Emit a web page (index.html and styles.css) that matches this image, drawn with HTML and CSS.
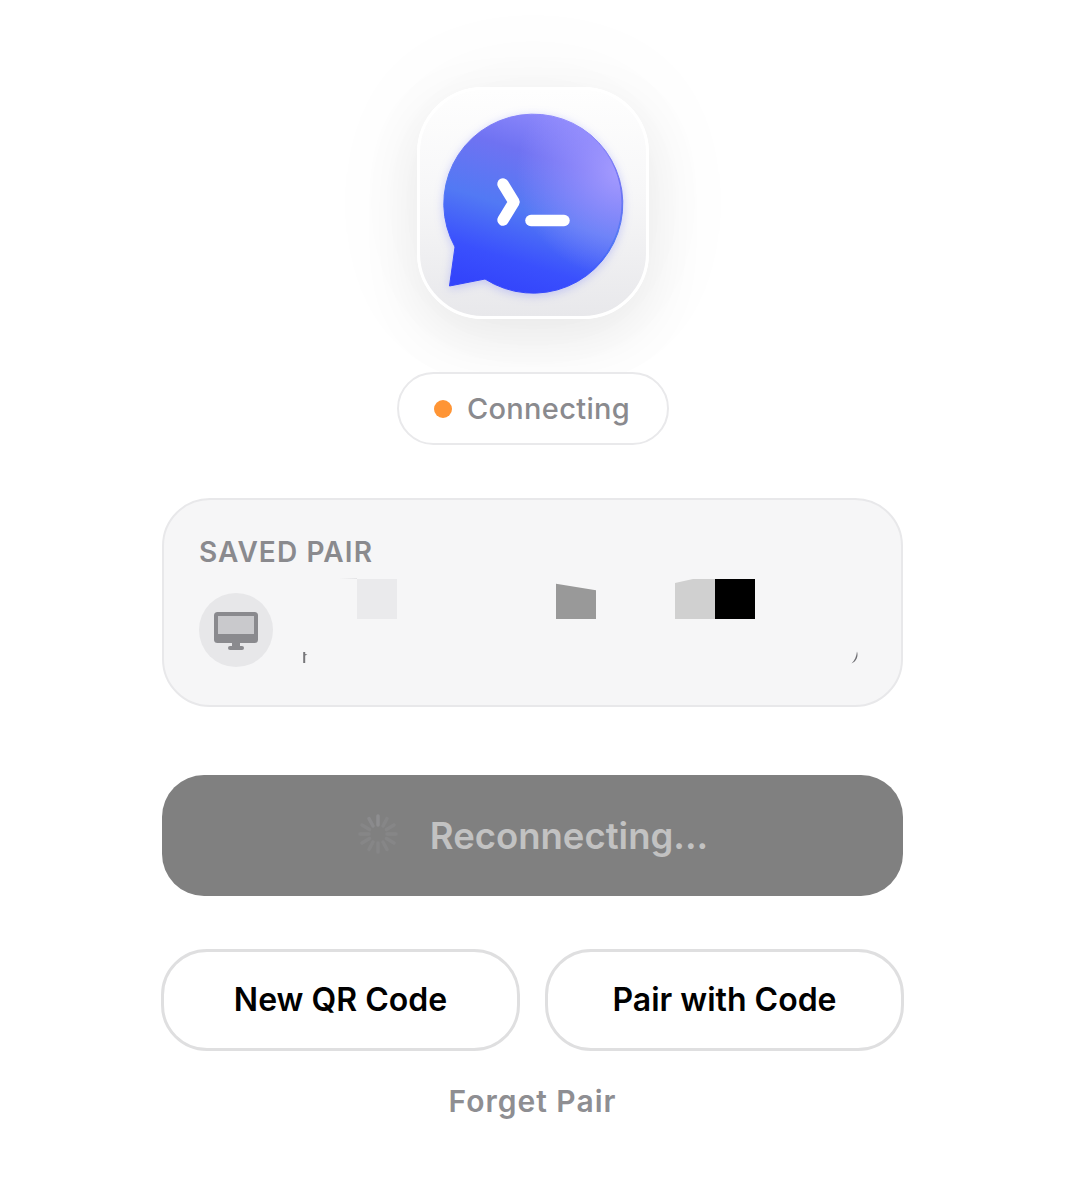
FILE: index.html
```html
<!DOCTYPE html>
<html>
<head>
<meta charset="utf-8">
<title>Saved Pair</title>
<link rel="stylesheet" href="styles.css">
</head>
<body>
<div class="page">
  <div class="app-icon">
    <svg class="app-glyph" width="226" height="226" viewBox="4 3 226 226">
      <defs>
        <linearGradient id="bubbleFill" gradientUnits="userSpaceOnUse" x1="140" y1="25" x2="85" y2="205">
          <stop offset="0" stop-color="#8f8afc"/>
          <stop offset="0.25" stop-color="#6f72f2"/>
          <stop offset="0.55" stop-color="#5279f4"/>
          <stop offset="0.82" stop-color="#3a50fd"/>
          <stop offset="1" stop-color="#3344fb"/>
        </linearGradient>
        <radialGradient id="bubbleEdge" gradientUnits="userSpaceOnUse" cx="205" cy="85" r="105">
          <stop offset="0" stop-color="#a89eff" stop-opacity=".95"/>
          <stop offset="0.45" stop-color="#a096ff" stop-opacity=".55"/>
          <stop offset="1" stop-color="#a096ff" stop-opacity="0"/>
        </radialGradient>
      </defs>
      <path class="bubble" d="M39 160 L33.5 199 L69 192 A89.5 89.5 0 1 0 39 160 Z" fill="url(#bubbleFill)" stroke="url(#bubbleFill)"/>
      <circle cx="116" cy="116" r="89.5" fill="url(#bubbleEdge)"/>
      <path class="prompt" d="M87 97 L98 115 L87 133"/>
      <path class="prompt" d="M115 133.5 L148 133.5"/>
    </svg>
  </div>

  <div class="status-pill">
    <span class="status-dot"></span>
    <span class="status-text">Connecting</span>
  </div>

  <div class="pair-card">
    <div class="pair-label">SAVED PAIR</div>
    <div class="pair-row">
      <div class="device-badge">
        <svg class="device-icon" width="46" height="40" viewBox="0 0 46 40">
          <rect x="1" y="1" width="44" height="31" rx="3.5" fill="#8a8a8e"/>
          <rect x="5" y="5" width="36" height="18" fill="#c9c9cc"/>
          <rect x="19" y="32" width="8" height="5" fill="#8a8a8e"/>
          <rect x="15" y="35" width="16" height="4" rx="2" fill="#8a8a8e"/>
        </svg>
      </div>
      <div class="pair-info">
        <div class="mosaic">
          <span class="tile tile-light"></span>
          <span class="tile tile-mid"></span>
          <span class="tile tile-soft"></span>
          <span class="tile tile-black"></span>
        </div>
        <div class="marks">
          <svg width="6" height="12" viewBox="0 0 6 12"><path d="M1.2 1 H3.2 V3 L5.5 3.6 L3.2 4.4 V12 H1.2 Z" fill="#77777a"/></svg>
          <svg width="8" height="13" viewBox="0 0 8 13"><path d="M6 0.5 C7.6 5 5.5 10.5 0.5 12.5 C3.8 9.6 5.4 5.5 6 0.5 Z" fill="#6d6d72"/></svg>
        </div>
      </div>
    </div>
  </div>

  <div class="reconnect-btn">
    <svg class="spinner" width="42" height="42" viewBox="0 0 42 42">
      <g stroke="#868687" stroke-width="3.5" stroke-linecap="round">
        <path d="M21 3V12" stroke="#8e8e90"/><path d="M30 5.5L26 13"/><path d="M37 12L29.5 16.5"/><path d="M39 21H30"/>
        <path d="M37 30L29.5 25.5"/><path d="M30 36.5L26 29"/><path d="M21 39V30"/><path d="M12 36.5L16 29"/>
        <path d="M5 30L12.5 25.5"/><path d="M3 21H12"/><path d="M5 12L12.5 16.5"/><path d="M12 5.5L16 13" stroke="#8a8a8c"/>
      </g>
    </svg>
    <span>Reconnecting...</span>
  </div>

  <div class="action-row">
    <div class="action-btn">New QR Code</div>
    <div class="action-btn">Pair with Code</div>
  </div>

  <div class="forget-link">Forget Pair</div>
</div>
</body>
</html>
```

FILE: styles.css
```css
html,body{margin:0;padding:0;background:#fff}
body{font-family:Inter,"Liberation Sans",sans-serif;height:1200px;overflow:hidden}

.page{width:743px;margin:0 auto;padding-top:87px;display:flex;flex-direction:column;align-items:center}

.app-icon{width:226px;height:226px;border:3px solid #fff;border-radius:66px;background:linear-gradient(180deg,#fefefe 0%,#f7f7f8 45%,#e8e8eb 100%);box-shadow:0 18px 60px rgba(0,0,0,.08),0 0 120px rgba(0,0,0,.04)}
.app-glyph{display:block;filter:drop-shadow(0 2px 5px rgba(80,90,255,.28))}
.bubble{stroke-width:1;stroke-linejoin:round}
.prompt{fill:none;stroke:#fff;stroke-width:11.5;stroke-linecap:round;stroke-linejoin:round}

.status-pill{box-sizing:border-box;width:272px;height:73px;margin-top:53px;padding-right:1px;border:2px solid #e9e9eb;border-radius:37px;background:#fff;display:flex;align-items:center;justify-content:center;gap:15px}
.status-dot{width:18px;height:18px;border-radius:50%;background:#ff9535}
.status-text{font-size:29px;font-weight:500;color:#8a8a8e;letter-spacing:.3px}

.pair-card{box-sizing:border-box;width:741px;height:209px;margin-top:53px;padding:35px 35px 0;border:2px solid #e8e8ea;border-radius:48px;background:#f6f6f7}
.pair-label{font-size:28px;line-height:34px;font-weight:600;color:#8a8a8e;letter-spacing:1.1px}
.pair-row{display:flex;gap:24px;margin-top:10px}
.device-badge{width:74px;height:74px;margin-top:14px;border-radius:50%;background:#e7e7e9;display:flex;align-items:center;justify-content:center;flex:none}
.device-icon{margin-top:2px}
.pair-info{flex:1}
.mosaic{display:flex;height:40px}
.tile{display:block;width:40px;height:40px}
.tile-light{position:relative;margin-left:60px;background:#eaeaec}
.tile-light::before{content:"";position:absolute;left:-17px;top:-1px;width:17px;height:1px;background:linear-gradient(90deg,#f5f5f6,#e4e4e6)}
.tile-mid{margin-left:159px;background:#999;clip-path:polygon(0 12%,100% 28%,100% 100%,0 100%)}
.tile-soft{margin-left:79px;background:#d0d0d0;clip-path:polygon(0 10%,45% 0,100% 0,100% 100%,0 100%)}
.tile-black{background:#000}
.marks{display:flex;justify-content:space-between;align-items:flex-start;margin-top:32px;padding:0 7px 0 5px}

.reconnect-btn{width:741px;height:121px;margin-top:68px;border-radius:42px;background:#808080;display:flex;align-items:center;justify-content:center;gap:31px}
.reconnect-btn span{font-size:36.5px;font-weight:600;color:#c2c2c2}
.spinner{margin-top:-4px}

.action-row{display:flex;gap:25px;width:743px;margin-top:53px}
.action-btn{box-sizing:border-box;flex:1;height:102px;padding-bottom:2px;border:3px solid #dfdfe0;border-radius:46px;background:#fff;display:flex;align-items:center;justify-content:center;font-size:32px;font-weight:600;color:#000}

.forget-link{margin-top:30px;font-size:30px;line-height:40px;font-weight:600;color:#8e8e92;letter-spacing:1px}
```
